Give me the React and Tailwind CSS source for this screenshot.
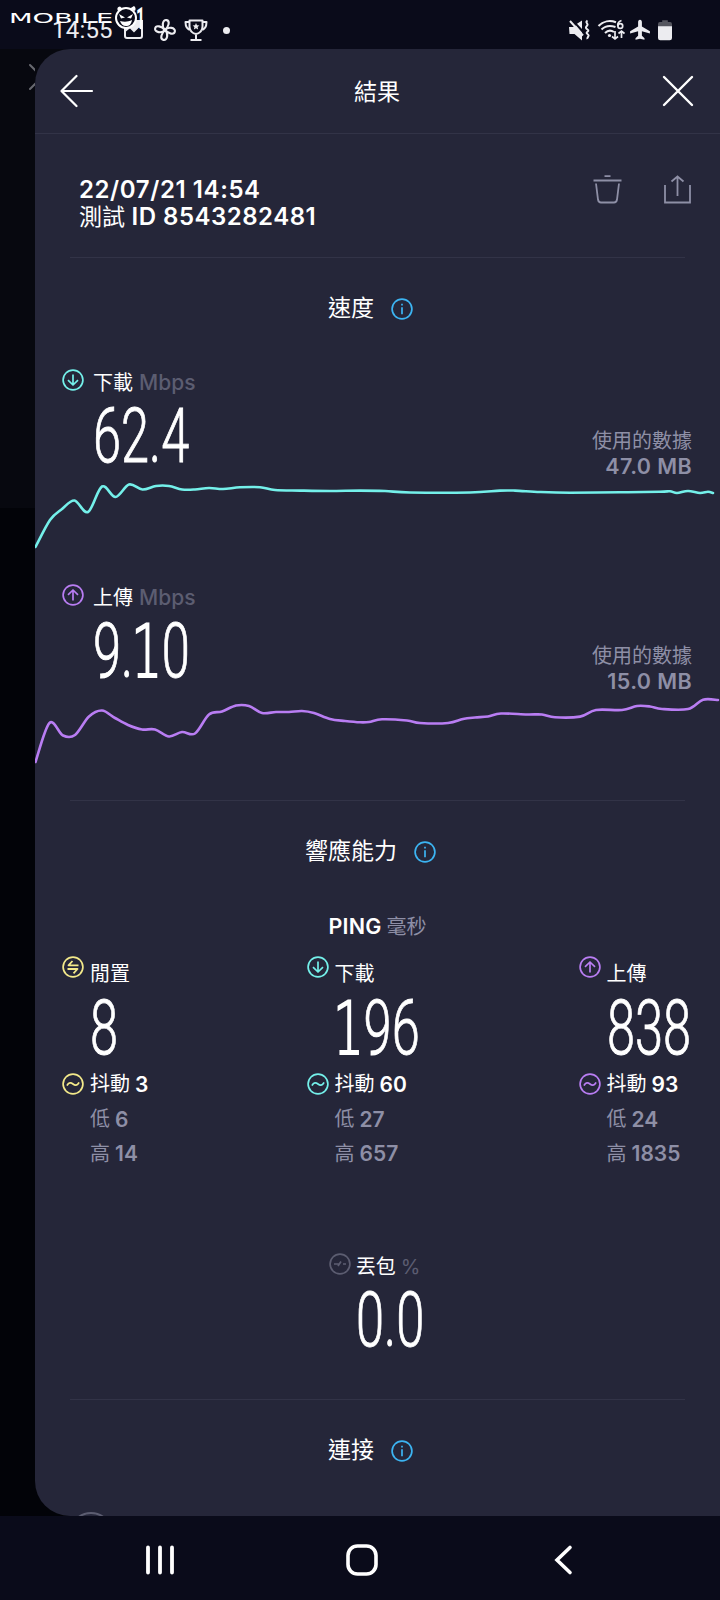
import { clsx } from 'clsx';

const TEAL = '#74f0ea';
const PURPLE = '#b97df3';
const YELLOW = '#f3e98a';

const downloadPoints = [
  [0.5, 69], [15, 42], [27, 31], [39.5, 22.5], [53, 34], [67, 8.5], [80.5, 19], [94, 6.5], [107.5, 11.5],
  [121, 8], [134, 8], [147, 11.5], [160, 11.5], [174, 10], [188, 11], [205, 9.3], [225, 9.2], [240, 12],
  [265, 12.6], [295, 13], [325, 12.6], [350, 13], [375, 14.5], [435, 14.5], [465, 12.6], [480, 12.6],
  [505, 14], [535, 14.7], [585, 14.3], [625, 13.7], [635, 13.3], [642, 15], [653, 13], [665, 15], [673, 13.8], [678, 15],
];

const uploadPoints = [
  [0.5, 69], [14.5, 30], [28, 42.5], [40, 42], [54, 23.5], [67, 17.5], [80, 25], [93, 32], [107, 36.5],
  [120, 36.5], [134, 43.5], [147, 39], [160, 40.5], [174, 21.5], [187, 18.5], [201, 12.5], [214, 13],
  [227, 20], [241, 19], [254, 19], [267, 18], [279, 20], [295, 26], [310, 28], [325, 29.3], [334, 29],
  [347, 26.3], [372, 27.5], [385, 30], [413, 30], [428, 26], [440, 24.5], [453, 23.5], [466, 20.5],
  [492, 21.5], [507, 21.5], [520, 24.3], [545, 23.6], [561, 17], [587, 17], [602, 13], [615, 13.5],
  [627, 16], [653, 16], [668, 6.7], [683, 7],
];

// Catmull-Rom spline through every sample
function smoothPath(points) {
  let d = `M${points[0][0]} ${points[0][1]}`;
  for (let i = 0; i < points.length - 1; i++) {
    const p0 = points[i - 1] || points[i];
    const p1 = points[i];
    const p2 = points[i + 1];
    const p3 = points[i + 2] || p2;
    d += ` C${p1[0] + (p2[0] - p0[0]) / 6} ${p1[1] + (p2[1] - p0[1]) / 6} ${p2[0] - (p3[0] - p1[0]) / 6} ${p2[1] - (p3[1] - p1[1]) / 6} ${p2[0]} ${p2[1]}`;
  }
  return d;
}

const glyphs = {
  down: <path d="M11 5.5v10.5M6 11.2l5 4.800 5-4.800" />,
  up: <path d="M11 16.500V6M6 10.800L11 6l5 4.800" />,
  idle: <path d="M16.500 9.300H6.500l4-4.300M7 9.300h9.500M5.500 13h10l-4 4.300M5.500 13h9.500" strokeWidth="1.800" />,
  jitter: <path d="M5.300 12c1.500-2.700 3.700-2.500 5.700-1s4.200 1.600 5.700-1" strokeLinecap="round" />,
  loss: <path d="M5 11h4.500M14 11h3M9 13l3-4.500" />,
  info: <path d="M11 9.200v7M11 5.800v1.700" />,
};

function RingIcon({ glyph, color }) {
  return (
    <svg className="w-[22px] h-[22px] shrink-0" viewBox="0 0 22 22" fill="none" stroke={color} strokeWidth="1.7" strokeLinejoin="round">
      <circle cx="11" cy="11" r="9.9" />
      {glyphs[glyph]}
    </svg>
  );
}

function BigNumber({ value }) {
  return (
    <div className="origin-left scale-x-[0.665] whitespace-nowrap font-['Roboto',sans-serif] font-light [-webkit-text-stroke:0.9px_white] text-[76px] leading-[56px] h-[56px] w-0">
      {value.split('').map((char, i) => (
        <span
          key={i}
          className={clsx(char === '1' && "inline-block font-['DejaVu_Sans',sans-serif] font-extralight [-webkit-text-stroke:2.2px_white] text-[73px] w-[43px] -indent-[3px]")}
        >
          {char}
        </span>
      ))}
    </div>
  );
}

function SectionHeading({ children }) {
  return (
    <div className="h-[101px] flex items-center justify-center gap-[17px] pr-[14px] text-[23px] leading-none">
      <h2>{children}</h2>
      <RingIcon glyph="info" color="#3cb4f2" />
    </div>
  );
}

function Divider() {
  return <div className="h-px mx-[35px] bg-[#323347]" />;
}

function SpeedMetric({ glyph, label, value, used, color, points }) {
  return (
    <section className="h-[215px] flex flex-col">
      <div className="h-[119px] flex justify-between pl-[27px] pr-[28px]">
        <div className="flex gap-[9px] pt-[10px]">
          <RingIcon glyph={glyph} color={color} />
          <div>
            <div className="flex items-center gap-[6px] h-[27px] leading-none">
              <span className="text-[20px]">{label}</span>
              <span className="text-[21px] font-medium text-[#5c5d71]">Mbps</span>
            </div>
            <div className="pt-[12px]">
              <BigNumber value={value} />
            </div>
          </div>
        </div>
        <div className="flex flex-col pt-[69px] text-right text-[#8e8fa6]">
          <span className="text-[20px] leading-[26px]">使用的數據</span>
          <span className="text-[21.5px] leading-[25px] font-semibold tracking-[0.4px]">{used}</span>
        </div>
      </div>
      <svg className="w-full h-[96px]" viewBox="0 0 685 96" fill="none">
        <path d={smoothPath(points)} stroke={color} strokeWidth="2.6" strokeLinecap="round" strokeLinejoin="round" />
      </svg>
    </section>
  );
}

function PingColumn({ glyph, label, value, jitter, low, high, color }) {
  return (
    <div className="flex gap-[6px] pt-[7px]">
      <div className="flex flex-col gap-[95px]">
        <RingIcon glyph={glyph} color={color} />
        <RingIcon glyph="jitter" color={color} />
      </div>
      <div className="leading-none">
        <div className="h-[35px] flex items-center text-[20px]">{label}</div>
        <div className="pt-[9px]">
          <BigNumber value={value} />
        </div>
        <div className="h-[46px] pt-[10px] flex items-center gap-[5px] text-[20px]">
          抖動 <span className="text-[21px] font-semibold">{jitter}</span>
        </div>
        <div className="h-[34px] flex items-center gap-[5px] text-[20px] text-[#8e8fa6]">
          低 <span className="text-[21px] font-semibold">{low}</span>
        </div>
        <div className="h-[35px] flex items-center gap-[5px] text-[20px] text-[#8e8fa6]">
          高 <span className="text-[21px] font-semibold">{high}</span>
        </div>
      </div>
    </div>
  );
}

function Watermark() {
  return (
    <div className="absolute left-[9px] top-[4px] flex items-center h-[26px] text-white">
      <span className="w-[105px] h-[14px] mt-[2px] font-['DejaVu_Sans',sans-serif] text-[14px] leading-[14px]">
        <span className="inline-block origin-left scale-x-[1.95]">MOBILE</span>
      </span>
      <svg className="w-[26px] h-[26px]" viewBox="0 0 26 26" fill="none">
        <path d="M4 7Q2 3 6 2.500L9 5M21 7q1.500-3-1-5l-4 2.500" fill="#fff" />
        <circle cx="12" cy="14" r="10" fill="#0a0b1a" stroke="#fff" strokeWidth="2" />
        <path d="M5 10l6 3.500-4 1zM19 10l-6 3.500 4 1z" fill="#fff" />
        <path d="M6 17c4 1 8 1 12-1-1 5-3 6-6 6s-5-2-6-5z" fill="#fff" />
      </svg>
      <span className="-ml-[4px] w-[8px] font-['Roboto',sans-serif] font-bold text-[31px] leading-[26px]">
        <span className="inline-block origin-left scale-x-[0.5] pt-[3px]">1</span>
      </span>
    </div>
  );
}

const petal = 'M12 12C7.500 9.500 7.500 2 11.500 2c3.800 0 3.500 6 .5 10z';

function StatusBar() {
  return (
    <header className="relative h-[49px] bg-[#0a0b1a] flex items-center justify-between pl-[52px] pr-[48px] pt-[11px] text-[#ececf0]">
      <div className="flex items-center">
        <span className="w-[71px] font-['Roboto',sans-serif] text-[24px] leading-none tracking-[0.2px]">14:55</span>
        <svg className="w-[21px] h-[22px]" viewBox="0 0 21 22" fill="none" stroke="currentColor" strokeWidth="2">
          <rect x="2" y="2" width="17" height="17" rx="2" />
          <path d="M2 12l5-4 4 4 5-5 3 3v-8H2z" fill="currentColor" />
        </svg>
        <svg className="ml-[9px] w-[24px] h-[24px]" viewBox="0 0 24 24" fill="none" stroke="currentColor" strokeWidth="2.1" strokeLinejoin="round">
          <path d={petal} transform="rotate(12 12 12)" />
          <path d={petal} transform="rotate(102 12 12)" />
          <path d={petal} transform="rotate(192 12 12)" />
          <path d={petal} transform="rotate(282 12 12)" />
        </svg>
        <svg className="ml-[7px] w-[24px] h-[24px]" viewBox="0 0 24 24" fill="none" stroke="currentColor" strokeWidth="2" strokeLinejoin="round">
          <path d="M5.500 2.500h13v6c0 4-3 7-6.500 7.500-3.500-.5-6.500-3.500-6.500-7.500zM5.500 4H1.500c0 4 1 7.500 5.500 8M18.500 4h4c0 4-1 7.500-5.500 8M12 16v5.500M6.500 22h11" />
          <path d="M12 5l1 2.300 2.400.2-1.800 1.600.5 2.400-2.100-1.300-2.100 1.300.5-2.400-1.800-1.600 2.400-.2z" fill="currentColor" stroke="none" />
        </svg>
        <span className="ml-[15px] w-[7px] h-[7px] rounded-full bg-current" />
      </div>
      <div className="flex items-center">
        <svg className="w-[22px] h-[22px]" viewBox="0 0 22 22" fill="none" stroke="currentColor" strokeWidth="1.800">
          <path d="M1 8h4l3-1.500 6 7v8L6.500 15H1.500zM14 1.500V10L9 4.800z" fill="currentColor" stroke="none" />
          <path d="M2 2l13 14.500M19.500 1.500c-3 2 1 3 0 4.500s-3 2.500 0 4.500-3 2.500 0 4.500-1 3 0 5" strokeWidth="2" />
        </svg>
        <svg className="ml-[7px] w-[28px] h-[22px]" viewBox="0 0 28 22" fill="none" stroke="currentColor" strokeWidth="2">
          <path d="M1.500 7C6 2 13 1 19 3.200M4.500 10.500C8 7 13 6 18.500 8M8 14c3-3 6-3 9-1" />
          <path d="M18 12v8M15 17.500l3 2.500 3-2.500M24.500 19v-7M21.500 14.500l3-2.500 3 2.500" strokeWidth="1.700" />
          <circle cx="12.500" cy="16.500" r="1.600" fill="currentColor" stroke="none" />
          <path d="M24.500 1.500c-3 1-4 3.500-3.700 5.500" strokeWidth="1.700" />
          <circle cx="23.300" cy="7" r="2.400" strokeWidth="1.700" />
        </svg>
        <svg className="ml-[4px] w-[22px] h-[22px]" viewBox="0 0 22 22" fill="currentColor">
          <path d="M11 .8c1.300 0 1.900 1.200 1.900 2.500v4.200l8 4.800v2.200l-8-2.200v4.500l2.600 2.400v1.500L11 19.800l-4.500.9v-1.500l2.600-2.400v-4.500l-8 2.200v-2.200l8-4.800V3.300C9.100 2 9.700.8 11 .8z" />
        </svg>
        <svg className="ml-[7px] w-[14px] h-[22px]" viewBox="0 0 15 23">
          <path d="M4.500 1h6v2H13q2 0 2 2v4H0V5q0-2 2-2h2.500z" fill="#55565f" />
          <path d="M0 7.500h15V20q0 2.500-2.500 2.500h-10Q0 22.500 0 20z" fill="currentColor" />
        </svg>
      </div>
      <Watermark />
    </header>
  );
}

function NavBar() {
  return (
    <nav className="h-[84px] bg-[#0a0b1a] flex items-center pl-[144px] pt-[4px]">
      <svg className="w-[32px] h-[32px]" viewBox="0 0 32 32" stroke="#fff" strokeWidth="3.800" strokeLinecap="round">
        <path d="M4 3.500v25M16 3.500v25M28 3.500v25" />
      </svg>
      <svg className="ml-[169px] w-[34px] h-[34px]" viewBox="0 0 34 34" fill="none" stroke="#fff" strokeWidth="3.600">
        <rect x="3" y="3" width="28" height="28" rx="9.500" />
      </svg>
      <svg className="ml-[174px] w-[20px] h-[32px]" viewBox="0 0 20 32" fill="none" stroke="#fff" strokeWidth="3.600" strokeLinecap="round">
        <path d="M17 3.500L4 16l13 12.500" />
      </svg>
    </nav>
  );
}

export default function App() {
  return (
    <div className="w-[720px] h-[1600px] overflow-hidden flex flex-col bg-black font-['Inter','Noto_Sans_CJK_TC',sans-serif] text-white">
      <StatusBar />

      <div className="h-[1467px] flex bg-linear-to-b from-[#07080f] from-[459px] to-[#020308] to-[459px]">
        {/* Page underneath, peeking out on the left */}
        <div className="w-[35px] shrink-0 pt-[14px] pl-[28px] overflow-hidden">
          <svg className="w-[28px] h-[28px]" viewBox="0 0 28 28" stroke="#686970" strokeWidth="2" strokeLinecap="round">
            <path d="M2 2l24 24M26 2L2 26" />
          </svg>
        </div>

        <main className="w-[685px] overflow-hidden rounded-l-[35px] bg-[#252639]">
          <div className="h-[85px] border-b border-[#323347] flex items-center justify-between pl-[25px] pr-[26px]">
            <svg className="w-[34px] h-[34px]" viewBox="0 0 34 34" fill="none" stroke="#fff" strokeWidth="2.200" strokeLinecap="round" strokeLinejoin="round">
              <path d="M32 17H1.500M16.500 2l-15 15 15 15" />
            </svg>
            <h1 className="pt-[3px] pr-[2px] text-[23px] leading-none">結果</h1>
            <svg className="w-[32px] h-[32px]" viewBox="0 0 32 32" stroke="#fff" strokeWidth="2.400" strokeLinecap="round">
              <path d="M2 2l28 28M30 2L2 30" />
            </svg>
          </div>

          <div className="h-[123px] flex justify-between pl-[44px] pr-[28px] pt-[41px]">
            <div className="pt-[1px] text-[24px] leading-[27px] font-semibold tracking-[0.5px]">
              <p className="tracking-[0.6px]">22/07/21 14:54</p>
              <p><span className="font-normal text-[23px] tracking-normal">測試</span> ID 8543282481</p>
            </div>
            <div className="flex gap-[41px]">
              <svg className="w-[29px] h-[29px]" viewBox="0 0 29 29" fill="none" stroke="#8e8fa6" strokeWidth="1.800">
                <path d="M11.500 1.200h6M.5 5.500h28M3 8.500l2 16q.5 3 3 3h13q2.500 0 3-3l2-16" />
              </svg>
              <svg className="w-[29px] h-[29px]" viewBox="0 0 29 29" fill="none" stroke="#8e8fa6" strokeWidth="1.800">
                <path d="M2 10v17.500h25V10M14.500 21V1.500M8.500 6.500l6-5 6 5" />
              </svg>
            </div>
          </div>
          <Divider />

          <SectionHeading>速度</SectionHeading>
          <SpeedMetric glyph="down" label="下載" value="62.4" used="47.0 MB" color={TEAL} points={downloadPoints} />
          <SpeedMetric glyph="up" label="上傳" value="9.10" used="15.0 MB" color={PURPLE} points={uploadPoints} />
          <div className="pt-[11px]">
            <Divider />
          </div>

          <SectionHeading>響應能力</SectionHeading>
          <div className="h-[47px] pt-[2px] flex items-center justify-center gap-[5px] leading-none">
            <span className="text-[21.500px] font-semibold tracking-[0.2px]">PING</span>
            <span className="text-[20px] text-[#8e8fa6]">毫秒</span>
          </div>
          <div className="h-[297px] grid grid-cols-[244.5px_272px_1fr] pl-[27px]">
            <PingColumn glyph="idle" label="閒置" value="8" jitter="3" low="6" high="14" color={YELLOW} />
            <PingColumn glyph="down" label="下載" value="196" jitter="60" low="27" high="657" color={TEAL} />
            <PingColumn glyph="up" label="上傳" value="838" jitter="93" low="24" high="1835" color={PURPLE} />
          </div>

          <div className="h-[153px] flex justify-center gap-[5px] pt-[7px] pr-[6px]">
            <RingIcon glyph="loss" color="#5c5d71" />
            <div>
              <div className="h-[27px] flex items-center gap-[5px] leading-none text-[20px]">
                <span>丟包</span>
                <span className="text-[#5c5d71]">%</span>
              </div>
              <div className="pt-[12px]">
                <BigNumber value="0.0" />
              </div>
            </div>
          </div>
          <Divider />

          <SectionHeading>連接</SectionHeading>
          <div className="pl-[34px] pt-[11px]">
            <div className="w-[44px] h-[44px] rounded-full border-2 border-[#5c5d71]" />
          </div>
        </main>
      </div>

      <NavBar />
    </div>
  );
}
